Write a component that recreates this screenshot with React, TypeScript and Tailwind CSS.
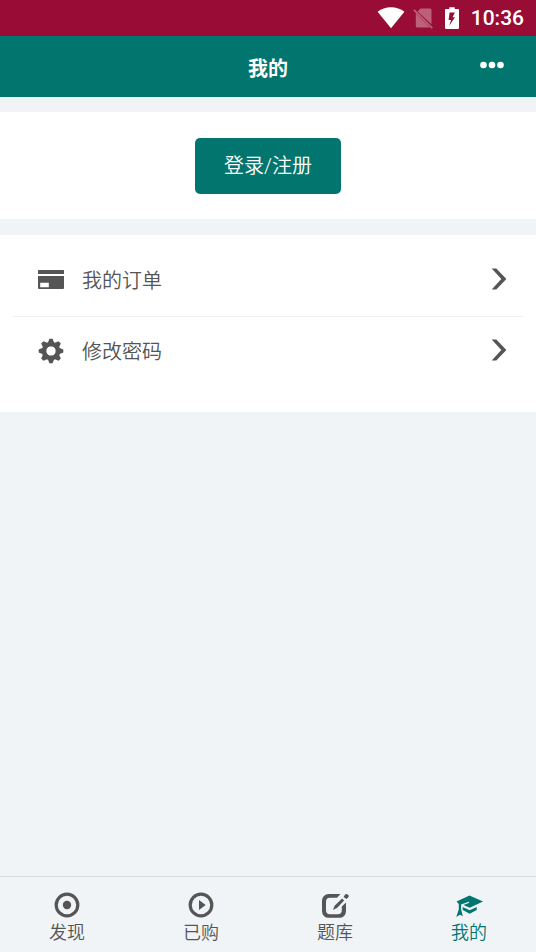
import {FC, ReactNode} from "react";

const IconWifi = () => (
    <svg width="28" height="22" viewBox="0 0 28 22" fill="#fff">
        <path d="M14 21.3 0.6 4.8C4.3 1.9 8.9 0.3 14 0.3s9.700 1.600 13.400 4.500z" />
    </svg>
);

const IconNoSim = () => (
    <svg width="20" height="22" viewBox="0 0 20 22" fill="#fff" fillOpacity="0.35">
        <path d="M7.500 1.500h9.500a1.500 1.500 0 0 1 1.500 1.500v14.300L4.600 4.500zM2.800 6.300 17 20.500H4.300a1.500 1.500 0 0 1-1.500-1.500z" />
        <path d="M1.500 2.300 0.300 3.500 18.700 21.800l1.200-1.200z" />
    </svg>
);

const IconBattery = () => (
    <svg width="14" height="22" viewBox="0 0 14 22" fill="#fff">
        <path fillRule="evenodd" d="M4.300 0.300h5.400v1.700H13a1 1 0 0 1 1 1V21a1 1 0 0 1-1 1H1a1 1 0 0 1-1-1V3a1 1 0 0 1 1-1h3.300zM4.600 5.500 3.600 13h2.500L4.200 18.800l5.800-8.500H7.500L9.900 5.500z" />
    </svg>
);

const IconMore = () => (
    <svg width="24" height="8" viewBox="0 0 24 8" fill="#fff">
        <circle cx="3.500" cy="4" r="3.300" />
        <circle cx="12" cy="4" r="3.300" />
        <circle cx="20.500" cy="4" r="3.300" />
    </svg>
);

const IconCard = () => (
    <svg width="26" height="20" viewBox="0 0 26 20" fill="currentColor">
        <path d="M0.500 0h25a.5.5 0 0 1 .5.5v3.500H0V.5a.5.5 0 0 1 .5-.5z" />
        <path fillRule="evenodd" d="M0 6h26v12a1 1 0 0 1-1 1H1a1 1 0 0 1-1-1zM2.200 12.700v4.500h8.600v-4.500z" />
    </svg>
);

const IconGear = () => (
    <svg width="26" height="26" viewBox="-13 -13 26 26" fill="currentColor">
        {[0, 45, 90, 135].map((deg) => (
            <path key={deg} transform={`rotate(${deg})`} d="M-1.600-12.300h3.200L3.200-8v3.200h-6.400V-8zM-1.600 12.300h3.200L3.200 8V4.800h-6.400V8z" />
        ))}
        <circle r="7" fill="none" stroke="currentColor" strokeWidth="4.400" />
    </svg>
);

const IconChevron = () => (
    <svg width="16" height="22" viewBox="0 0 16 22" fill="#555">
        <path d="M0.700 0.500h4.600L15.400 11 5.300 21.500H0.700L10.300 11z" />
    </svg>
);

const IconDiscover = () => (
    <svg width="28" height="26" viewBox="0 0 28 26">
        <circle cx="14" cy="13" r="10.800" fill="none" stroke="currentColor" strokeWidth="3.200" />
        <circle cx="14" cy="13" r="4.200" fill="currentColor" />
    </svg>
);

const IconPlay = () => (
    <svg width="28" height="26" viewBox="0 0 28 26">
        <circle cx="14" cy="13" r="10.800" fill="none" stroke="currentColor" strokeWidth="3.200" />
        <path d="M12 7.900 18.700 13 12 18.100z" fill="currentColor" />
    </svg>
);

const IconEdit = () => (
    <svg width="28" height="26" viewBox="0 0 28 26">
        <path d="M19.500 2 16 5.700H9A4 4 0 0 0 5 9.700V18.300A4 4 0 0 0 9 22.300h7.800a4 4 0 0 0 4-4V14.500l4.200-4V19.300a6.500 6.500 0 0 1-6.500 6.500H7.500A6.500 6.500 0 0 1 1 19.300V8.500A6.500 6.500 0 0 1 7.500 2z" fill="currentColor" />
        <path d="m11.900 18 1.700-4.300 7.500-7.200 2 2-6.800 7.300z" fill="currentColor" />
        <path d="m22.600 4.900 1.300-2.200a2.200 2.200 0 0 1 3.500 2.600L25.400 7z" fill="currentColor" />
    </svg>
);

const IconCap = () => (
    <svg width="28" height="26" viewBox="0 0 28 26" fill="currentColor">
        <path d="M14.500 3.400 28 9.500 14.700 15.800 8.500 13l5.800-2.200-.6-1L6.100 12.500v4.800l1.700 7-2.800-1.600-3.700 2.200 2.500-7.600v-5.400L1.500 9.500z" />
        <path d="M7.700 14.900 14.700 18.300l7-3.400v3.200l-7 3.600-7-3.600z" />
    </svg>
);

interface IMenuRow {
    icon: ReactNode,
    title: string,
}
const MenuRow:FC<IMenuRow> = ({ icon, title }) => (
    <button type="button" className="flex w-full items-center h-[70px] pl-[25px] pr-4 text-[#555]">
        <span className="flex w-[26px] justify-center pb-0.5">{icon}</span>
        <span className="ml-[18px] text-xl">{title}</span>
        <span className="ml-auto pb-1"><IconChevron /></span>
    </button>
);

interface ITabItem {
    icon: ReactNode,
    title: string,
    active?: boolean,
}
const TabItem:FC<ITabItem> = ({ icon, title, active }) => (
    <a href="#" className={`flex flex-1 flex-col items-center pt-[15px] ${active ? "text-[#02766e]" : "text-[#555]"}`}>
        {icon}
        <span className="text-lg leading-[30px]">{title}</span>
    </a>
);

const App = () => {
    return (<div className="flex min-h-screen flex-col bg-[#f0f4f7] font-['Roboto','Noto_Sans_CJK_SC',sans-serif] font-[350]">
        <div className="flex h-9 items-center justify-end bg-[#990c36] pr-3 text-white">
            <IconWifi />
            <div className="ml-2 mr-3"><IconNoSim /></div>
            <IconBattery />
            <span className="ml-3 pt-0.5 text-[21px] font-medium">10:36</span>
        </div>
        <header className="grid h-[61px] grid-cols-3 items-center bg-[#02766e] px-8 text-white">
            <h1 className="col-start-2 pt-1 text-center text-xl font-bold">我的</h1>
            <button type="button" aria-label="更多" className="justify-self-end pb-1"><IconMore /></button>
        </header>

        <section className="mt-[15px] flex justify-center bg-white pt-[26px] pb-[25px]">
            <button type="button" className="h-14 rounded-[5px] bg-[#02766e] px-[29px] text-xl text-white">登录/注册</button>
        </section>

        <section className="mt-4 bg-white px-[13px] pt-[11px] pb-[25px]">
            <MenuRow icon={<IconCard />} title="我的订单" />
            <div className="border-t border-[#f0f0f0]" />
            <MenuRow icon={<IconGear />} title="修改密码" />
        </section>

        <nav className="mt-auto flex h-[76px] border-t border-[#d9dbdd]">
            <TabItem icon={<IconDiscover />} title="发现" />
            <TabItem icon={<IconPlay />} title="已购" />
            <TabItem icon={<IconEdit />} title="题库" />
            <TabItem icon={<IconCap />} title="我的" active />
        </nav>
    </div>)
};

export default App;
